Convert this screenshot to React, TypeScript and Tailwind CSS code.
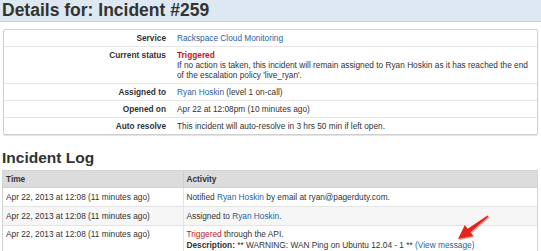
const details = [
  { label: "Service", value: <a className="text-[#2a64a0]">Rackspace Cloud Monitoring</a> },
  {
    label: "Current status",
    value: (
      <>
        <div className="font-bold text-[#c0171b]">Triggered</div>
        <div>
          If no action is taken, this incident will remain assigned to Ryan Hoskin as it has reached the end
          of the escalation policy 'live_ryan'.
        </div>
      </>
    ),
  },
  {
    label: "Assigned to",
    value: (
      <>
        <a className="text-[#2a64a0]">Ryan Hoskin</a> (level 1 on-call)
      </>
    ),
  },
  { label: "Opened on", value: "Apr 22 at 12:08pm (10 minutes ago)" },
  { label: "Auto resolve", value: "This incident will auto-resolve in 3 hrs 50 min if left open." },
];

const time = "Apr 22, 2013 at 12:08 (11 minutes ago)";
const arrow = "487.5,215.4 467.7,228.7 464.8,224.9 458,239 473.4,236.1 470.5,232.3 488.5,216.6";

export default function App() {
  return (
    <div
      className="relative w-[541px] h-[251px] overflow-hidden bg-white text-[8.3px] text-[#333]"
      style={{ fontFamily: '"Liberation Sans", Arial, sans-serif' }}
    >
      <div className="h-[22px] bg-[#dde8f2] border-b border-[#bcd3e8] pl-[2px]">
        <h1 className="text-[17.5px] leading-[21px] font-bold text-[#333]">Details for: Incident #259</h1>
      </div>

      <div className="mt-[7px] ml-[3px] mr-[3px] border border-[#cfcfcf] rounded-[2px] shadow-[0_1px_1px_rgba(0,0,0,0.12)]">
        <table className="w-full border-collapse">
          <tbody>
            {details.map((row, i) => (
              <tr key={row.label} className={i > 0 ? "border-t border-[#e6e6e6]" : ""}>
                <td className="w-[167px] pr-[5px] py-[3px] leading-[10px] text-right font-bold align-top">
                  {row.label}
                </td>
                <td className="pl-[6px] pr-[4px] py-[3px] leading-[10px] align-top">{row.value}</td>
              </tr>
            ))}
          </tbody>
        </table>
      </div>

      <h2 className="mt-[13px] ml-[2px] text-[15.5px] leading-[19px] font-bold text-[#333]">Incident Log</h2>

      <div className="mt-[3px] ml-[2px] mr-[3px] border border-[#d4d4d4]">
        <table className="w-full border-collapse">
          <thead>
            <tr className="bg-[#dcdcdc] border-b border-[#cfcfcf]">
              <th className="w-[180px] pl-[3px] py-[3px] leading-[10px] text-left font-bold border-r border-[#d0d0d0]">
                Time
              </th>
              <th className="pl-[3px] py-[3px] leading-[10px] text-left font-bold">Activity</th>
            </tr>
          </thead>
          <tbody>
            <tr className="border-b border-[#e4e4e4]">
              <td className="pl-[3px] py-[4px] leading-[10px] border-r border-[#e4e4e4] align-top">{time}</td>
              <td className="pl-[3px] py-[4px] leading-[10px] align-top">
                Notified <a className="text-[#2a64a0]">Ryan Hoskin</a> by email at ryan@pagerduty.com.
              </td>
            </tr>
            <tr className="bg-[#f6f6f6] border-b border-[#e4e4e4]">
              <td className="pl-[3px] py-[4px] leading-[10px] border-r border-[#e4e4e4] align-top">{time}</td>
              <td className="pl-[3px] py-[4px] leading-[10px] align-top">
                Assigned to <a className="text-[#2a64a0]">Ryan Hoskin</a>.
              </td>
            </tr>
            <tr>
              <td className="pl-[3px] py-[3px] leading-[11px] border-r border-[#e4e4e4] align-top">{time}</td>
              <td className="pl-[3px] py-[3px] leading-[11px] align-top">
                <span className="text-[#b5232a]">Triggered</span> through the API.
                <div>
                  <b>Description:</b> ** WARNING: WAN Ping on Ubuntu 12.04 - 1 **{" "}
                  <a className="text-[#2a64a0]">(View message)</a>
                </div>
              </td>
            </tr>
          </tbody>
        </table>
      </div>

      <svg className="absolute left-0 top-0 pointer-events-none" width="541" height="251" viewBox="0 0 541 251">
        <polygon points={arrow} fill="#8a140e" opacity="0.35" transform="translate(1,1.2)" />
        <polygon points={arrow} fill="#e3251d" />
      </svg>
    </div>
  );
}
